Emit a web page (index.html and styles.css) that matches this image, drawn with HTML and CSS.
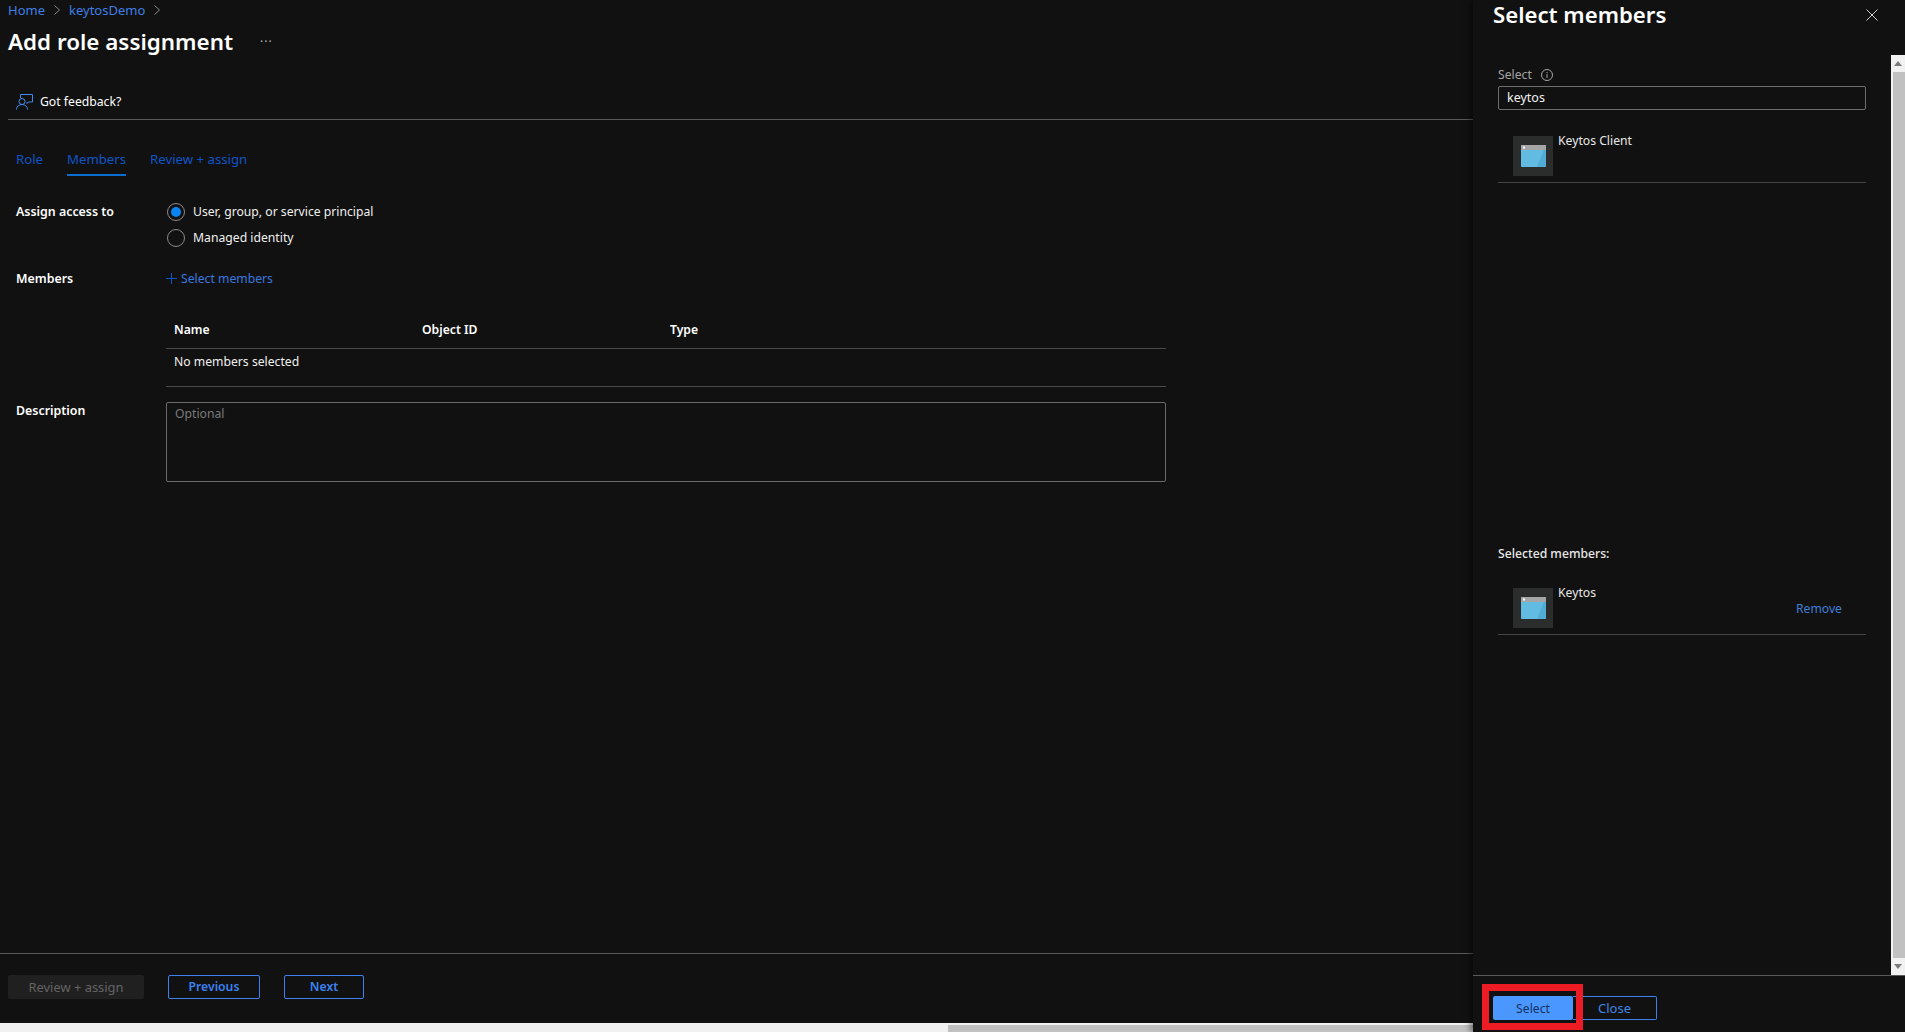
FILE: index.html
```html
<!DOCTYPE html>
<html lang="en">
<head>
  <meta charset="UTF-8">
  <title>Add role assignment</title>
  <link rel="stylesheet" href="styles.css">
</head>
<body>
  <div class="app">
    <main class="page">
      <nav class="crumbs">
        <a>Home</a>
        <svg class="crumb-sep" viewBox="0 0 6 10"><path d="M0.500 0.500l5 4.500-5 4.500" /></svg>
        <a>keytosDemo</a>
        <svg class="crumb-sep" viewBox="0 0 6 10"><path d="M0.500 0.500l5 4.500-5 4.500" /></svg>
      </nav>
      <div class="title-row">
        <h1>Add role assignment</h1>
        <span class="more">···</span>
      </div>
      <div class="toolbar">
        <svg class="feedback-icon" viewBox="0 0 17 17">
          <path d="M4.500 5V1.500H16.500V9H12.500L11 10.500V9" />
          <circle cx="6" cy="8.500" r="3" />
          <path d="M0.500 16.500c0-3 2.500-5 5.500-5s5.500 2 5.500 5" />
        </svg>
        <span>Got feedback?</span>
      </div>
      <div class="tabs">
        <a class="tab">Role</a>
        <a class="tab active">Members</a>
        <a class="tab">Review + assign</a>
      </div>
      <section class="form">
        <div class="row row-access">
          <div class="row-label">Assign access to</div>
          <div class="radios">
            <div class="radio-item"><span class="radio checked"></span>User, group, or service principal</div>
            <div class="radio-item"><span class="radio"></span>Managed identity</div>
          </div>
        </div>
        <div class="row row-members">
          <div class="row-label">Members</div>
          <a class="add-link">
            <svg viewBox="0 0 11 11"><path d="M5.500 0v11M0 5.500h11" /></svg>
            Select members
          </a>
        </div>
        <div class="row row-table">
          <div class="row-label"></div>
          <div class="members-table">
            <div class="table-head">
              <span class="col">Name</span>
              <span class="col">Object ID</span>
              <span class="col">Type</span>
            </div>
            <div class="table-body">No members selected</div>
          </div>
        </div>
        <div class="row row-desc">
          <div class="row-label">Description</div>
          <div class="textarea">Optional</div>
        </div>
      </section>
      <footer class="page-footer">
        <button class="btn btn-disabled">Review + assign</button>
        <button class="btn btn-outline btn-prev">Previous</button>
        <button class="btn btn-outline btn-next">Next</button>
      </footer>
      <div class="hscroll"><div class="hscroll-thumb"></div></div>
    </main>

    <aside class="panel">
      <div class="panel-head">
        <h2>Select members</h2>
        <svg class="close-x" viewBox="0 0 12 12"><path d="M0.500 0.500l11 11M11.500 0.500l-11 11" /></svg>
      </div>
      <div class="panel-main">
        <div class="panel-body">
          <div class="select-label">
            Select
            <svg class="info" viewBox="0 0 12 12">
              <circle cx="6" cy="6" r="5.500" />
              <path d="M6 5.200v3.600M6 3v1.200" />
            </svg>
          </div>
          <div class="search-box">keytos</div>
          <div class="member">
            <div class="app-tile">
              <svg viewBox="0 0 25 22">
                <rect x="0" y="0" width="25" height="22" rx="1" fill="#62bbe0" />
                <path d="M25 5v17h-9l7-17z" fill="#52add6" />
                <rect x="0" y="0" width="25" height="5" fill="#a5a5a5" />
                <rect x="2" y="1.500" width="2" height="2" fill="#fff" />
              </svg>
            </div>
            <span class="member-name">Keytos Client</span>
          </div>
          <div class="selected-title">Selected members:</div>
          <div class="member member-selected">
            <div class="app-tile">
              <svg viewBox="0 0 25 22">
                <rect x="0" y="0" width="25" height="22" rx="1" fill="#62bbe0" />
                <path d="M25 5v17h-9l7-17z" fill="#52add6" />
                <rect x="0" y="0" width="25" height="5" fill="#a5a5a5" />
                <rect x="2" y="1.500" width="2" height="2" fill="#fff" />
              </svg>
            </div>
            <span class="member-name">Keytos</span>
            <a class="remove">Remove</a>
          </div>
        </div>
        <div class="vscroll">
          <div class="vscroll-btn"><span class="arrow-up"></span></div>
          <div class="vscroll-thumb"></div>
          <div class="vscroll-btn"><span class="arrow-down"></span></div>
        </div>
      </div>
      <div class="panel-footer">
        <button class="btn btn-primary">Select</button>
        <button class="btn btn-outline btn-close">Close</button>
        <div class="highlight"></div>
      </div>
    </aside>
  </div>
</body>
</html>
```

FILE: styles.css
```css
* {
  box-sizing: border-box;
}
html, body {
  margin: 0;
  height: 100%;
  overflow: hidden;
}
body {
  font-family: "Noto Sans", "Open Sans", "Liberation Sans", sans-serif;
  font-size: 12.200px;
  line-height: 18px;
  color: #f0f0f0;
  background: #111;
}
a {
  color: #3b82f0;
}
.app {
  display: flex;
  height: 1032px;
}

/* left page */
.page {
  width: 1473px;
  height: 100%;
  display: flex;
  flex-direction: column;
  background: #111;
}
.crumbs {
  display: flex;
  align-items: center;
  height: 20px;
  padding-left: 8px;
  font-size: 13px;
}
.crumbs a {
  color: #3f7fe6;
}
.crumb-sep {
  width: 6px;
  height: 10px;
  margin: 0 9px;
  fill: none;
  stroke: #8a8a8a;
  stroke-width: 1;
}
.title-row {
  display: flex;
  align-items: center;
  height: 44px;
  padding-left: 8px;
}
h1 {
  margin: 0;
  font-size: 22.400px;
  line-height: 30px;
  font-weight: 600;
  color: #fff;
}
.more {
  margin-left: 27px;
  color: #b0b0b0;
  font-size: 12px;
  letter-spacing: 1px;
}
.toolbar {
  display: flex;
  align-items: center;
  height: 56px;
  margin-left: 8px;
  padding: 21px 0 0 8px;
  border-bottom: 1px solid #5a5a5a;
  color: #fff;
}
.feedback-icon {
  width: 17px;
  height: 17px;
  margin-right: 7px;
  margin-top: -2px;
  fill: none;
  stroke: #3f8bef;
  stroke-width: 1;
}
.tabs {
  display: flex;
  height: 56px;
  padding: 29px 0 0 16px;
  gap: 24px;
}
.tab {
  height: 27px;
  color: #0f55c8;
  font-size: 13.200px;
  line-height: 20px;
}
.tab.active {
  border-bottom: 2px solid #0a6fd0;
}
.form {
  flex: 1;
  padding: 27px 0 0 16px;
}
.row {
  display: flex;
}
.row-label {
  width: 150px;
  flex-shrink: 0;
  font-size: 12.400px;
  font-weight: 600;
  color: #fff;
}
.row-access {
  height: 67px;
}
.radios {
  display: flex;
  flex-direction: column;
  gap: 8px;
}
.radio-item {
  display: flex;
  align-items: center;
  height: 18px;
  gap: 8px;
  margin-left: 1px;
}
.radio {
  width: 18px;
  height: 18px;
  border: 1px solid #8a8a8a;
  border-radius: 50%;
  display: flex;
  align-items: center;
  justify-content: center;
}
.radio.checked::after {
  content: "";
  width: 10px;
  height: 10px;
  border-radius: 50%;
  background: #0a84f0;
}
.row-members {
  height: 41px;
}
.add-link {
  display: flex;
  align-items: flex-start;
  gap: 4px;
  color: #3b78e0;
}
.add-link svg {
  width: 11px;
  height: 11px;
  margin-top: 3px;
  fill: none;
  stroke: #0f55c8;
  stroke-width: 1;
}
.row-table {
  height: 91px;
}
.members-table {
  width: 1000px;
  height: 76px;
  border-bottom: 1px solid #4a4a4a;
}
.table-head {
  display: flex;
  align-items: center;
  height: 38px;
  padding-left: 8px;
  border-bottom: 1px solid #4a4a4a;
  font-weight: 600;
  color: #fff;
}
.col {
  width: 248px;
}
.table-body {
  padding: 4px 0 0 8px;
}
.textarea {
  width: 1000px;
  height: 80px;
  padding: 2px 8px;
  border: 1px solid #6a6a6a;
  border-radius: 2px;
  color: #7a7a7a;
}
.page-footer {
  display: flex;
  align-items: center;
  height: 70px;
  padding: 0 0 4px 8px;
  border-top: 1px solid #5a5a5a;
}
.btn {
  height: 24px;
  padding: 0;
  border-radius: 2px;
  font-family: inherit;
  font-size: 12.200px;
  font-weight: 600;
  background: transparent;
}
.btn-disabled {
  width: 136px;
  border: none;
  background: #202020;
  color: #636363;
  font-size: 12.900px;
  font-weight: 400;
}
.btn-outline {
  border: 1px solid #3b82f0;
  color: #3b82f0;
}
.btn-prev {
  width: 92px;
  margin-left: 24px;
}
.btn-next {
  width: 80px;
  margin-left: 24px;
}
.hscroll {
  height: 9px;
  background: #f1f1f1;
  display: flex;
  justify-content: flex-end;
  align-items: flex-end;
}
.hscroll-thumb {
  width: 525px;
  height: 7px;
  background: #c1c1c1;
}

/* right panel */
.panel {
  width: 432px;
  height: 100%;
  display: flex;
  flex-direction: column;
  background: #111;
  box-shadow: -3px 0 6px rgba(0, 0, 0, 0.45);
}
.panel-head {
  display: flex;
  align-items: center;
  justify-content: space-between;
  height: 55px;
  padding: 0 27px 25px 20px;
}
h2 {
  margin: 0;
  font-size: 22.200px;
  line-height: 30px;
  font-weight: 600;
  color: #fff;
}
.close-x {
  width: 12px;
  height: 12px;
  fill: none;
  stroke: #d0d0d0;
  stroke-width: 1;
}
.panel-main {
  display: flex;
  height: 920px;
}
.panel-body {
  flex: 1;
  padding: 10px 0 0 25px;
}
.select-label {
  display: flex;
  align-items: center;
  gap: 9px;
  height: 20px;
  color: #a5a5a5;
}
.info {
  width: 12px;
  height: 12px;
  fill: none;
  stroke: #a5a5a5;
  stroke-width: 1;
}
.search-box {
  width: 368px;
  height: 24px;
  margin-top: 1px;
  padding-left: 8px;
  border: 1px solid #6e6e6e;
  border-radius: 2px;
  line-height: 22px;
  font-size: 12.500px;
  color: #f0f0f0;
}
.member {
  position: relative;
  display: flex;
  width: 368px;
  height: 73px;
  padding: 0 0 6px 15px;
  align-items: flex-end;
  border-bottom: 1px solid #444;
}
.member-selected {
  height: 58px;
}
.app-tile {
  width: 40px;
  height: 40px;
  background: #2b2d2d;
  display: flex;
  align-items: center;
  justify-content: center;
  flex-shrink: 0;
}
.app-tile svg {
  width: 25px;
  height: 22px;
}
.member-name {
  align-self: flex-start;
  margin: 22px 0 0 5px;
  color: #e8e8e8;
}
.member-selected .member-name {
  margin-top: 7px;
}
.selected-title {
  height: 32px;
  margin-top: 362px;
  font-weight: 500;
  color: #e8e8e8;
}
.remove {
  position: absolute;
  right: 24px;
  bottom: 16px;
  color: #3f7fd8;
}
.vscroll {
  width: 14px;
  display: flex;
  flex-direction: column;
  background: #f1f1f1;
}
.vscroll-btn {
  height: 17px;
  display: flex;
  align-items: center;
  justify-content: center;
  flex-shrink: 0;
}
.vscroll-thumb {
  flex: 1;
  background: #c1c1c1;
  margin-left: 2px;
}
.arrow-up {
  border: 4px solid transparent;
  border-top: 0;
  border-bottom: 5px solid #7a7a7a;
}
.arrow-down {
  border: 4px solid transparent;
  border-bottom: 0;
  border-top: 5px solid #7a7a7a;
}
.panel-footer {
  position: relative;
  flex: 1;
  display: flex;
  align-items: flex-start;
  padding: 20px 0 0 20px;
  border-top: 1px solid #5a5a5a;
}
.btn-primary {
  width: 80px;
  border: none;
  background: #4a98ff;
  color: #17305e;
  font-weight: 400;
}
.btn-close {
  width: 84px;
  border-left: none;
  border-radius: 0 2px 2px 0;
  color: #3f86e8;
  font-size: 13px;
  font-weight: 400;
}
.highlight {
  position: absolute;
  left: 9px;
  top: 8px;
  width: 101px;
  height: 46px;
  border: 7px solid #ed1c24;
  pointer-events: none;
}
```
